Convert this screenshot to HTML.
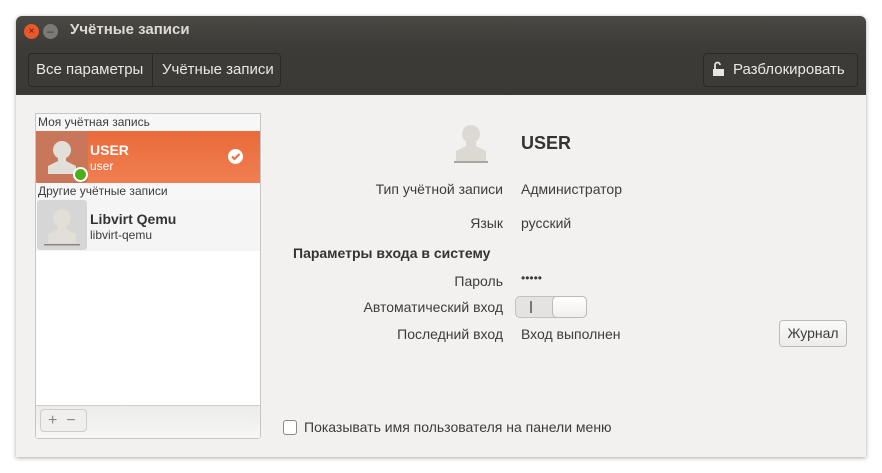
<!DOCTYPE html>
<html><head><meta charset="utf-8"><style>
*{margin:0;padding:0;box-sizing:border-box}
body{width:882px;height:473px;background:#fff;font-family:"Liberation Sans",sans-serif;font-size:14px;color:#3c3c3c;position:relative;overflow:hidden}
.win{position:absolute;left:16px;top:16px;width:850px;height:441px;border-radius:6px 6px 0 0;background:#f2f1f0;box-shadow:0 1px 4px rgba(0,0,0,.35);overflow:hidden}
.title{position:absolute;left:0;top:0;width:850px;height:79px;background:linear-gradient(#4a4944,#3c3b37 40%,#3a3935)}
.a{position:absolute;white-space:nowrap}
.btn{position:absolute;border:1px solid #2a2926;border-radius:4px;background:#3c3b37;color:#e8e8e6;font-size:14px;line-height:32px}
.lbl{position:absolute;right:363px;white-space:nowrap;text-align:right}
.val{position:absolute;left:505px;white-space:nowrap}
</style></head><body>
<div class="win">
 <div class="title">
  <div class="a" style="left:8px;top:8px;width:15px;height:15px;border-radius:50%;background:#e9582b;color:#5a1d0a;font-size:10px;line-height:15px;text-align:center">×</div>
  <div class="a" style="left:27px;top:8px;width:15px;height:15px;border-radius:50%;background:#7b7a75;color:#3a3935;font-size:12px;line-height:14px;text-align:center">–</div>
  <div class="a" style="left:54px;top:5px;color:#dfdbd2;font-weight:bold;font-size:15px">Учётные записи</div>
  <div class="btn" style="left:12px;top:37px;width:253px;height:34px"></div>
  <div class="a" style="left:20px;top:45px;color:#e8e8e6;font-size:15px">Все параметры</div>
  <div class="a" style="left:136px;top:38px;width:1px;height:32px;background:#2a2926"></div>
  <div class="a" style="left:146px;top:45px;color:#e8e8e6;font-size:15px">Учётные записи</div>
  <div class="btn" style="left:687px;top:37px;width:155px;height:34px"></div>
  <div class="a" style="left:697px;top:45px;width:11px;height:15px">
   <svg width="11" height="15"><path d="M2 8V4a2.5 2.5 0 0 1 5 0" fill="none" stroke="#e8e6e0" stroke-width="1.8"/><rect x="0" y="8" width="11" height="7" fill="#e8e6e0"/></svg></div>
  <div class="a" style="left:717px;top:45px;color:#e8e8e6;font-size:15px">Разблокировать</div>
 </div>
 <div class="a" style="left:19px;top:97px;width:226px;height:326px;border:1px solid #c8c6c2;background:#fff;border-radius:0 0 3px 3px"></div>
 <div class="a" style="left:20px;top:98px;width:224px;height:17px;background:#f7f7f7"></div>
 <div class="a" style="left:22px;top:99px;font-size:12px">Моя учётная запись</div>
 <div class="a" style="left:20px;top:115px;width:224px;height:52px;background:linear-gradient(#ea6a3a,#f07f52)"></div>
 <div class="a" style="left:20px;top:115px;width:52px;height:52px;background:#c9775a;border-radius:3px">
  <svg width="52" height="52"><circle cx="26" cy="19" r="9" fill="#e2dfd8"/><path d="M22 27h8v3l10 5v8H12v-8l10-5z" fill="#e2dfd8"/></svg></div>
 <div class="a" style="left:57px;top:151px;width:15px;height:15px;border-radius:50%;background:#4ab11d;border:2px solid #fff"></div>
 <div class="a" style="left:74px;top:126px;color:#fff;font-weight:bold;font-size:14px">USER</div>
 <div class="a" style="left:74px;top:143px;color:#fff;font-size:12px">user</div>
 <div class="a" style="left:212px;top:133px;width:15px;height:15px;border-radius:50%;background:#fff"><svg width="15" height="15"><path d="M4 7.5l2.5 2.5 5-5" fill="none" stroke="#ec7044" stroke-width="2.2"/></svg></div>
 <div class="a" style="left:20px;top:167px;width:224px;height:16px;background:#f7f7f7"></div>
 <div class="a" style="left:22px;top:168px;font-size:12px">Другие учётные записи</div>
 <div class="a" style="left:20px;top:183px;width:224px;height:52px;background:#f5f5f5"></div>
 <div class="a" style="left:21px;top:184px;width:50px;height:50px;background:#d6d6d6;border-radius:3px">
  <svg width="50" height="50"><circle cx="25" cy="18" r="9" fill="#e2dfd8"/><path d="M21 26h8v3l10 5v9H11v-9l10-5z" fill="#e2dfd8"/><rect x="7" y="44" width="36" height="1.5" fill="#888"/></svg></div>
 <div class="a" style="left:74px;top:195px;font-weight:bold;font-size:14px;color:#333">Libvirt Qemu</div>
 <div class="a" style="left:74px;top:212px;font-size:12px">libvirt-qemu</div>
 <div class="a" style="left:20px;top:389px;width:224px;height:33px;background:linear-gradient(#ececea,#f6f6f5);border-top:1px solid #d0cecb"></div>
 <div class="a" style="left:24px;top:393px;width:47px;height:23px;border:1px solid #cfcdca;border-radius:4px;background:#f0efee;color:#888;font-size:16px;line-height:21px;padding-left:7px">+&nbsp;&nbsp;−</div>
 <div class="a" style="left:437px;top:106px"><svg width="36" height="42"><circle cx="18" cy="12" r="9" fill="#dcd9d2"/><path d="M13 20h10v4l10 5v10H3V29l10-5z" fill="#dcd9d2"/><rect x="1" y="39" width="34" height="2" fill="#a9a7a2"/></svg></div>
 <div class="a" style="left:505px;top:117px;font-weight:bold;font-size:18px;color:#333">USER</div>
 <div class="lbl" style="top:165px">Тип учётной записи</div><div class="val" style="top:165px">Администратор</div>
 <div class="lbl" style="top:199px">Язык</div><div class="val" style="top:199px">русский</div>
 <div class="a" style="left:277px;top:229px;font-weight:bold;color:#333">Параметры входа в систему</div>
 <div class="lbl" style="top:257px">Пароль</div><div class="val" style="top:255px;font-size:12px">•••••</div>
 <div class="lbl" style="top:283px">Автоматический вход</div>
 <div class="a" style="left:499px;top:280px;width:72px;height:22px;border:1px solid #c4c2be;border-radius:5px;background:#e4e3e1"></div>
 <div class="a" style="left:514px;top:285px;width:2px;height:12px;background:#777"></div>
 <div class="a" style="left:536px;top:280px;width:35px;height:22px;border:1px solid #bdbbb7;border-radius:5px;background:linear-gradient(#fff,#f0efee)"></div>
 <div class="lbl" style="top:310px">Последний вход</div><div class="val" style="top:310px">Вход выполнен</div>
 <div class="a" style="left:763px;top:304px;width:68px;height:27px;border:1px solid #bdbbb7;border-radius:4px;background:linear-gradient(#fafafa,#edecea);text-align:center;line-height:25px">Журнал</div>
 <div class="a" style="left:267px;top:404px;width:14px;height:15px;border:1px solid #8a8884;border-radius:3px;background:#fff"></div>
 <div class="a" style="left:288px;top:403px">Показывать имя пользователя на панели меню</div>
</div>
</body></html>
